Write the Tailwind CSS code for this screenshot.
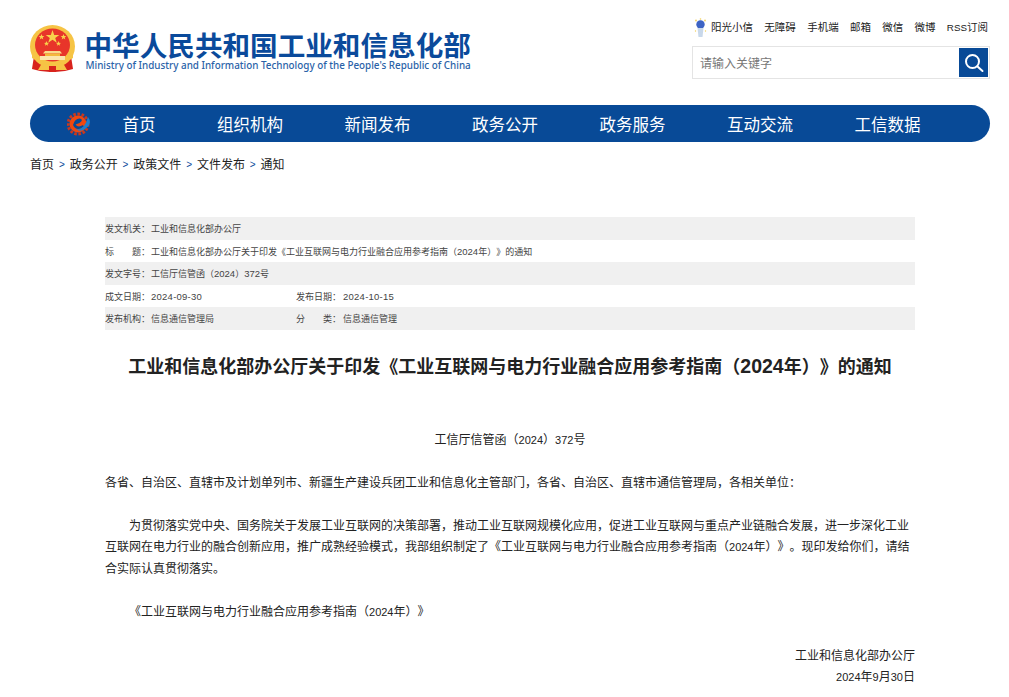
<!DOCTYPE html>
<html lang="zh-CN">
<head>
<meta charset="utf-8">
<title>工业和信息化部办公厅关于印发《工业互联网与电力行业融合应用参考指南（2024年）》的通知</title>
<script src="https://cdn.jsdelivr.net/npm/@tailwindcss/browser@4"></script>
</head>
<body class="bg-white font-['Liberation_Sans','Noto_Sans_CJK_SC',sans-serif] text-[#222] [text-spacing-trim:space-all]">
<div class="w-[1009px] h-[697px] overflow-hidden">
  <header class="flex justify-between pl-[30px] pr-[19px] h-[105px]">
    <div class="flex items-start pt-[25px] gap-[9.5px]">
      <svg class="w-[45px] h-[47px]" viewBox="0 0 45 47">
        <path d="M4 31 L2 44 L10 46 L20 47 L25 47 L35 46 L43 44 L41 31 Z" fill="#d8231c"/>
        <ellipse cx="22.5" cy="21.5" rx="22.5" ry="21.5" fill="#f6c445"/>
        <ellipse cx="22.5" cy="20" rx="17.5" ry="16.5" fill="#e8352a"/>
        <path d="M22.5 5 l1.7 4.9 5.1 0 -4.1 3 1.6 4.9 -4.3 -3 -4.3 3 1.6 -4.9 -4.1 -3 5.1 0z" fill="#f8d24c"/>
        <path d="M11.5 9 l.8 2 2 .1 -1.6 1.3 .6 2 -1.8 -1.2 -1.8 1.2 .6 -2 -1.6 -1.3 2 -.1z" fill="#f8d24c"/>
        <path d="M33.5 9 l.8 2 2 .1 -1.6 1.3 .6 2 -1.8 -1.2 -1.8 1.2 .6 -2 -1.6 -1.3 2 -.1z" fill="#f8d24c"/>
        <path d="M16.5 16 l.7 1.8 1.8 .1 -1.4 1.1 .5 1.8 -1.6 -1 -1.6 1 .5 -1.8 -1.4 -1.1 1.8 -.1z" fill="#f8d24c"/>
        <path d="M28.5 16 l.7 1.8 1.8 .1 -1.4 1.1 .5 1.8 -1.6 -1 -1.6 1 .5 -1.8 -1.4 -1.1 1.8 -.1z" fill="#f8d24c"/>
        <path d="M15 26 h15 l2 2.5 h-19z" fill="#f8dc8a"/><rect x="15" y="28.5" width="15" height="2.5" fill="#f3b93c"/><rect x="10" y="31" width="25" height="4" fill="#fbe6ad"/>
        <path d="M2 28 Q22.5 50 43 28 L43 33 Q22.5 47 2 33Z" fill="#f6c445"/>
        <path d="M12 38 Q22.5 42 33 38 L37 45 L8 45z" fill="#f6c445"/><path d="M19 41 h7 v6 h-7z" fill="#d8231c"/>
      </svg>
      <div class="pt-[4px]">
        <div class="text-[27.6px] leading-[30px] font-bold text-[#0a4a9b] font-['Noto_Sans_CJK_SC',sans-serif] whitespace-nowrap">中华人民共和国工业和信息化部</div>
        <div class="ml-[1px] text-[9.85px] leading-[12px] font-medium text-[#2a62a8] font-['Noto_Sans',sans-serif] whitespace-nowrap">Ministry of Industry and Information Technology of the People's Republic of China</div>
      </div>
    </div>
    <div class="w-[298px] pt-[18px]">
      <div class="flex items-center justify-end gap-[11.3px] text-[10.5px] leading-[21px] text-[#222] h-[19px] pr-[2px] whitespace-nowrap">
        <span class="flex items-center gap-[4px]">
          <svg class="w-[13px] h-[20px]" viewBox="0 0 13 20"><circle cx="6.5" cy="6.5" r="4.2" fill="#3d63c4"/><path d="M3.5 10 h6 l-1 9 h-4z" fill="#c9d8ea"/><circle cx="2" cy="2.5" r=".9" fill="#f2cf5a"/><circle cx="11" cy="2.5" r=".9" fill="#f2cf5a"/><circle cx="6.5" cy="1" r=".8" fill="#f2cf5a"/><circle cx="1.5" cy="13" r=".7" fill="#f2cf5a"/><circle cx="11.5" cy="13" r=".7" fill="#f2cf5a"/></svg>
          阳光小信</span>
        <span>无障碍</span><span>手机端</span><span>邮箱</span><span>微信</span><span>微博</span><span><span class="text-[9.8px]">RSS</span>订阅</span>
      </div>
      <div class="mt-[9px] h-[33px] border border-[#e4e4e4] flex items-center justify-between pl-[7px] pr-[1px]">
        <span class="text-[12px] leading-[20px] pt-[2px] text-[#777]">请输入关键字</span>
        <span class="w-[29px] h-[29px] bg-[#084a97] flex items-center justify-center">
          <svg class="w-[20px] h-[20px]" viewBox="0 0 20 20" fill="none" stroke="#fff" stroke-width="2"><circle cx="8.5" cy="8.5" r="6.5"/><path d="M13.5 13.5 l5 4.5" stroke-linecap="round"/></svg>
        </span>
      </div>
    </div>
  </header>

  <nav class="mx-[30px] w-[960px] h-[37px] rounded-full bg-[#084a97] flex items-center pl-[37px] text-white text-[16.5px] leading-[26px] whitespace-nowrap">
    <svg class="w-[24px] h-[24px] mr-[31.5px]" viewBox="0 0 24 24">
      <circle cx="11" cy="12" r="10" fill="none" stroke="#c9381e" stroke-width="3" stroke-dasharray="2.6 1.6"/>
      <circle cx="11" cy="12" r="8.5" fill="#f0480f"/>
      <path d="M6 13 Q8 6 13 6.5 Q17 7.5 12.5 11 L8.5 12.5 Q11 16 16 13 L17 15 Q9 20 6 13Z" fill="#084a97"/>
      <path d="M9 17.5 Q18 18 21 5 Q26 12 18 17 Q13 20 9 17.5Z" fill="#1b7fd0"/>
    </svg>
    <div class="flex gap-[61.5px] pt-[2px]"><span>首页</span><span>组织机构</span><span>新闻发布</span><span>政务公开</span><span>政务服务</span><span>互动交流</span><span>工信数据</span></div>
  </nav>

  <div class="mx-[30px] mt-[13px] h-[20px] flex items-center gap-[4.9px] text-[12px] leading-[20px] text-[#222]">
    <span>首页</span><span class="text-[#0a4a9b] text-[10px]">&gt;</span><span>政务公开</span><span class="text-[#0a4a9b] text-[10px]">&gt;</span><span>政策文件</span><span class="text-[#0a4a9b] text-[10px]">&gt;</span><span>文件发布</span><span class="text-[#0a4a9b] text-[10px]">&gt;</span><span>通知</span>
  </div>

  <main class="ml-[105px] w-[810px] mt-[42px]">
    <div class="text-[9px] leading-[24px] text-[#444]">
      <div class="flex h-[22.5px] bg-[#f0f0f0]"><span class="w-[46px]">发文机关：</span><span>工业和信息化部办公厅</span></div>
      <div class="flex h-[22.5px]"><span class="w-[46px] flex"><span class="w-[36px] flex justify-between"><span>标</span><span>题</span></span>：</span><span>工业和信息化部办公厅关于印发《工业互联网与电力行业融合应用参考指南（<span class="text-[9.5px]">2024</span>年）》的通知</span></div>
      <div class="flex h-[22.5px] bg-[#f0f0f0]"><span class="w-[46px]">发文字号：</span><span>工信厅信管函（<span class="text-[9.5px]">2024</span>）<span class="text-[9.5px]">372</span>号</span></div>
      <div class="flex h-[22.5px]"><span class="w-[46px]">成文日期：</span><span class="w-[145px] text-[9.5px] tracking-[0.25px]">2024-09-30</span><span class="w-[47px]">发布日期：</span><span class="text-[9.5px] tracking-[0.25px]">2024-10-15</span></div>
      <div class="flex h-[22.5px] bg-[#f0f0f0]"><span class="w-[46px]">发布机构：</span><span class="w-[145px]">信息通信管理局</span><span class="w-[47px] flex"><span class="w-[36px] flex justify-between"><span>分</span><span>类</span></span>：</span><span>信息通信管理</span></div>
    </div>
    <h1 class="mt-[23px] text-[18px] leading-[26px] font-bold text-[#222] text-center whitespace-nowrap">工业和信息化部办公厅关于印发《工业互联网与电力行业融合应用参考指南（<span class="text-[19.5px]">2024</span>年）》的通知</h1>
    <div class="text-[12px] leading-[21.6px] text-[#222]">
      <p class="mt-[50px] text-center">工信厅信管函（<span class="text-[11px]">2024</span>）<span class="text-[11px]">372</span>号</p>
      <p class="mt-[21.6px]">各省、自治区、直辖市及计划单列市、新疆生产建设兵团工业和信息化主管部门，各省、自治区、直辖市通信管理局，各相关单位：</p>
      <p class="mt-[21.6px] indent-[24px]">为贯彻落实党中央、国务院关于发展工业互联网的决策部署，推动工业互联网规模化应用，促进工业互联网与重点产业链融合发展，进一步深化工业互联网在电力行业的融合创新应用，推广成熟经验模式，我部组织制定了《工业互联网与电力行业融合应用参考指南（<span class="text-[11px]">2024</span>年）》。现印发给你们，请结合实际认真贯彻落实。</p>
      <p class="mt-[21.6px] indent-[24px]">《工业互联网与电力行业融合应用参考指南（<span class="text-[11px]">2024</span>年）》</p>
      <p class="mt-[22.6px] text-right">工业和信息化部办公厅</p>
      <p class="text-right -mt-[1px]"><span class="text-[11px]">2024</span>年<span class="text-[11px]">9</span>月<span class="text-[11px]">30</span>日</p>
    </div>
  </main>
</div>
</body>
</html>
